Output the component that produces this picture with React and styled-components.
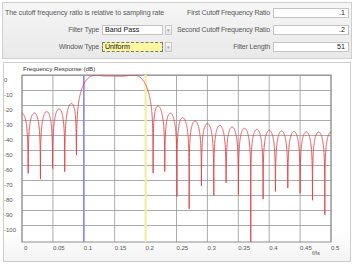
import React, { useMemo } from 'react';
import styled, { createGlobalStyle } from 'styled-components';

const GlobalStyle = createGlobalStyle`
  html, body {
    margin: 0;
    padding: 0;
    background: #ffffff;
    font-family: 'Liberation Sans', Arial, sans-serif;
  }
`;

const Page = styled.div`
  width: 354px;
  height: 266px;
  padding: 2px 2px 0 2px;
  box-sizing: border-box;
  display: flex;
  flex-direction: column;
  gap: 3px;
`;

const TopPanel = styled.div`
  height: 57px;
  box-sizing: border-box;
  border: 1px solid #cfcfcf;
  background: linear-gradient(#f6f6f6, #e9e9e9);
  padding: 5px 2px 0 2px;
  display: grid;
  grid-template-columns: 94px 70px 95px 76px;
  grid-template-rows: 10px 10px 10px;
  column-gap: 3px;
  row-gap: 7px;
  font-size: 7.1px;
  color: #5a5a5a;
`;

const Note = styled.div`
  grid-column: 1 / span 2;
  display: flex;
  align-items: center;
  white-space: nowrap;
  letter-spacing: -0.1px;
`;

const Label = styled.div`
  display: flex;
  align-items: center;
  justify-content: flex-end;
  white-space: nowrap;
  letter-spacing: -0.2px;
`;

const Combo = styled.div`
  display: flex;
  gap: 2px;
`;

const ComboBox = styled.div`
  flex: 1;
  box-sizing: border-box;
  display: flex;
  align-items: center;
  padding-left: 2px;
  color: #111;
  background: ${(p) => (p.$focused ? '#fdf6a0' : '#ffffff')};
  border: 1px ${(p) => (p.$focused ? 'dashed #777' : 'solid #c4c4c4')};
`;

const ComboButton = styled.div`
  width: 7px;
  box-sizing: border-box;
  border: 1px solid #c8c8c8;
  background: linear-gradient(#fafafa, #e4e4e4);
  display: flex;
  align-items: center;
  justify-content: center;
  color: #999;
  font-size: 5px;
`;

const NumberBox = styled.div`
  box-sizing: border-box;
  background: #ffffff;
  border: 1px solid #c4c4c4;
  display: flex;
  align-items: center;
  justify-content: flex-end;
  padding-right: 3px;
  color: #222;
`;

const ChartPanel = styled.div`
  height: 200px;
  margin: 0 1px;
  box-sizing: border-box;
  border: 1px solid #cdcdcd;
  background: linear-gradient(#ffffff 85%, #f3f3f3);
  display: flex;
  flex-direction: column;
`;

const ChartTitle = styled.div`
  height: 10px;
  padding-left: 19px;
  display: flex;
  align-items: center;
  font-size: 6.2px;
  color: #333;
`;

// plot geometry inside the svg
const W = 346;
const H = 188;
const PX = 18;
const PY = 2;
const PW = 309;
const PH = 167;
const DB_MIN = -(PH / 15) * 10;
const FONT = 'Liberation Sans, Arial, sans-serif';

const fx = (f) => PX + (f / 0.5) * PW;
const fy = (db) => PY + (db / DB_MIN) * PH;

function response(len, f1, f2, points) {
  const m = (len - 1) / 2;
  const h = [];
  for (let n = 0; n < len; n++) {
    const k = n - m;
    if (k === 0) h.push(2 * (f2 - f1));
    else h.push((Math.sin(2 * Math.PI * f2 * k) - Math.sin(2 * Math.PI * f1 * k)) / (Math.PI * k));
  }
  const mags = [];
  for (let i = 0; i <= points; i++) {
    const f = (i / points) * 0.5;
    let re = 0;
    let im = 0;
    for (let n = 0; n < len; n++) {
      re += h[n] * Math.cos(2 * Math.PI * f * n);
      im -= h[n] * Math.sin(2 * Math.PI * f * n);
    }
    mags.push([f, Math.sqrt(re * re + im * im)]);
  }
  const peak = Math.max(...mags.map((v) => v[1]));
  return mags
    .map(([f, a]) => {
      let db = 20 * Math.log10(a / peak + 1e-12);
      if (db < DB_MIN) db = DB_MIN;
      return `${fx(f).toFixed(2)},${fy(db).toFixed(2)}`;
    })
    .join(' ');
}

const Chart = () => {
  const curve = useMemo(() => response(51, 0.1, 0.2, 3000), []);
  const yTicks = [0, -10, -20, -30, -40, -50, -60, -70, -80, -90, -100];
  const xTicks = [0, 0.05, 0.1, 0.15, 0.2, 0.25, 0.3, 0.35, 0.4, 0.45, 0.5];

  return (
    <svg width={W} height={H} viewBox={`0 0 ${W} ${H}`} style={{ display: 'block' }}>
      <defs>
        <clipPath id="plot">
          <rect x={PX} y={PY} width={PW} height={PH} />
        </clipPath>
      </defs>
      <rect x={PX} y={PY} width={PW} height={PH} fill="#fff" />
      {yTicks.map((t) => (
        <g key={t}>
          <line x1={PX} x2={PX + PW} y1={fy(t) + 0.5} y2={fy(t) + 0.5} stroke="#969696" strokeWidth="0.8" />
          <text x="0" y={fy(t) + 6.5} fontSize="6" fill="#555" fontFamily={FONT}>
            {t}
          </text>
        </g>
      ))}
      {xTicks.map((t) => (
        <g key={t}>
          <line x1={fx(t)} x2={fx(t)} y1={PY} y2={PY + PH} stroke="#969696" strokeWidth="0.8" />
          <text x={fx(t) + (t === 0 ? 2 : 0)} y={PY + PH + 7.5} fontSize="6" fill="#555" fontFamily={FONT}>
            {t}
          </text>
        </g>
      ))}
      <text x={fx(0.5) - 19} y={PY + PH + 13} fontSize="6" fill="#555" fontFamily={FONT}>
        f/fs
      </text>
      <rect x={PX} y={PY} width={PW} height={PH} fill="none" stroke="#8c8c8c" strokeWidth="1" />
      <line x1={fx(0.1)} x2={fx(0.1)} y1={PY} y2={PY + PH} stroke="#8a8aef" strokeWidth="1.6" />
      <line x1={fx(0.2)} x2={fx(0.2)} y1={PY} y2={PY + PH} stroke="#f4efa0" strokeWidth="2.2" />
      <polyline points={curve} fill="none" stroke="#e2454a" strokeWidth="0.9" clipPath="url(#plot)" />
    </svg>
  );
};

const App = () => {
  return (
    <>
      <GlobalStyle />
      <Page>
        <TopPanel>
          <Note>The cutoff frequency ratio is relative to sampling rate</Note>
          <Label>First Cutoff Frequency Ratio</Label>
          <NumberBox>.1</NumberBox>

          <Label>Filter Type</Label>
          <Combo>
            <ComboBox>Band Pass</ComboBox>
            <ComboButton>▾</ComboButton>
          </Combo>
          <Label>Second Cutoff Frequency Ratio</Label>
          <NumberBox>.2</NumberBox>

          <Label>Window Type</Label>
          <Combo>
            <ComboBox $focused>Uniform</ComboBox>
            <ComboButton>▾</ComboButton>
          </Combo>
          <Label>Filter Length</Label>
          <NumberBox>51</NumberBox>
        </TopPanel>
        <ChartPanel>
          <ChartTitle>Frequency Response (dB)</ChartTitle>
          <Chart />
        </ChartPanel>
      </Page>
    </>
  );
};

export default App;
